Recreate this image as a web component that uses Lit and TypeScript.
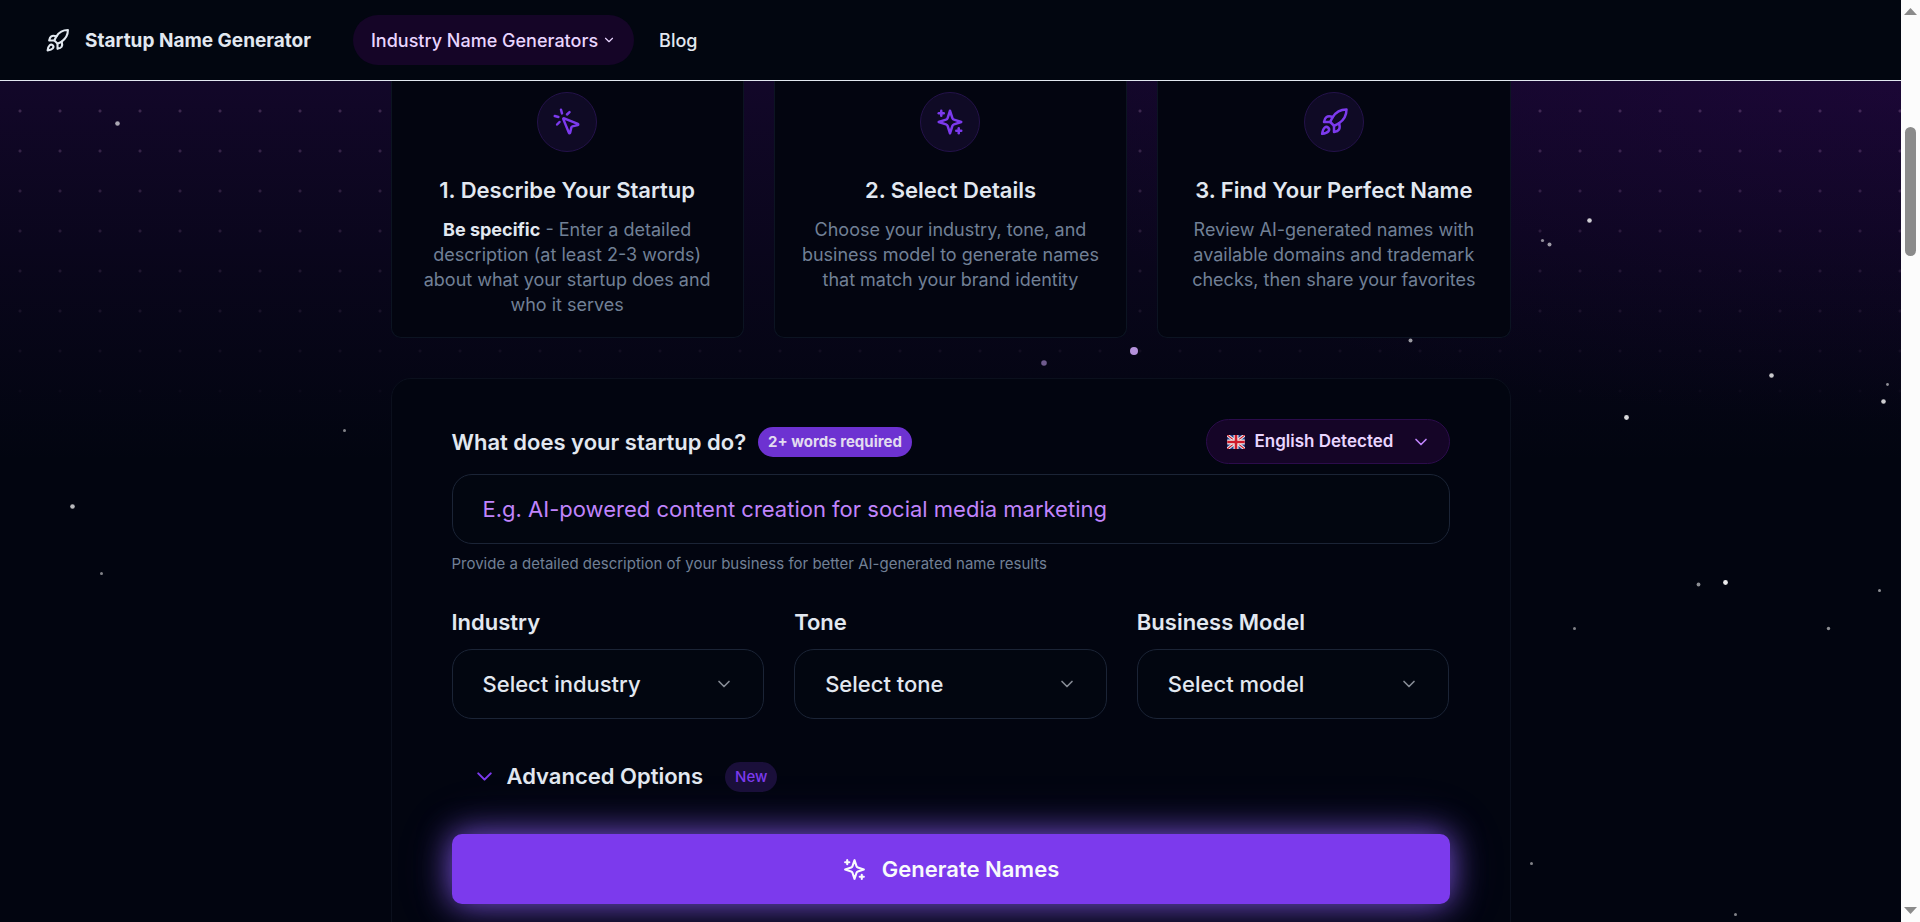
import { LitElement, html, css, svg, SVGTemplateResult } from "lit";
import { customElement } from "lit/decorators.js";

const icon = (cls: string, body: SVGTemplateResult) => html`
  <svg class="icon ${cls}" viewBox="0 0 24 24" aria-hidden="true">${body}</svg>
`;

const rocket = svg`
  <path d="M4.5 16.5c-1.5 1.26-2 5-2 5s3.74-.5 5-2c.71-.84.7-2.13-.09-2.91a2.18 2.18 0 0 0-2.91-.09z"></path>
  <path d="m12 15-3-3a22 22 0 0 1 2-3.95A12.88 12.88 0 0 1 22 2c0 2.72-.78 7.5-6 11a22.35 22.35 0 0 1-4 2z"></path>
  <path d="M9 12H4s.55-3.03 2-4c1.62-1.08 5 0 5 0"></path>
  <path d="M12 15v5s3.03-.55 4-2c1.08-1.62 0-5 0-5"></path>
`;
const pointer = svg`
  <path d="M14 4.1 12 6"></path>
  <path d="m5.1 8-2.9-.8"></path>
  <path d="m6 12-1.9 2"></path>
  <path d="M7.2 2.2 8 5.1"></path>
  <path d="M9.037 9.69a.498.498 0 0 1 .653-.653l11 4.5a.5.5 0 0 1-.074.949l-4.349 1.041a1 1 0 0 0-.74.739l-1.04 4.35a.5.5 0 0 1-.95.074z"></path>
`;
const sparkles = svg`
  <path d="m12 3-1.912 5.813a2 2 0 0 1-1.275 1.275L3 12l5.813 1.912a2 2 0 0 1 1.275 1.275L12 21l1.912-5.813a2 2 0 0 1 1.275-1.275L21 12l-5.813-1.912a2 2 0 0 1-1.275-1.275L12 3Z"></path>
  <path d="M5 3v4"></path>
  <path d="M19 17v4"></path>
  <path d="M3 5h4"></path>
  <path d="M17 19h4"></path>
`;
const chevron = svg`<path d="m6 9 6 6 6-6"></path>`;

const flag = html`
  <svg class="flag" viewBox="0 0 60 48" aria-hidden="true">
    <rect width="60" height="48" fill="#22408c"></rect>
    <path d="M0 0 60 48M60 0 0 48" stroke="#eee" stroke-width="11"></path>
    <path d="M0 0 60 48M60 0 0 48" stroke="#cf1b2b" stroke-width="4"></path>
    <path d="M30 0V48M0 24H60" stroke="#eee" stroke-width="17"></path>
    <path d="M30 0V48M0 24H60" stroke="#cf1b2b" stroke-width="9"></path>
  </svg>
`;

/* x, y, radius, opacity */
const STARS: [number, number, number, number][] = [
  [117, 123, 2.3, 0.65], [72, 506, 2.3, 0.72], [101, 573, 1.5, 0.5], [344, 430, 1.5, 0.5],
  [1589, 220, 2.3, 0.8], [1542, 240, 1.6, 0.55], [1549, 244, 2, 0.6], [1771, 375, 2.3, 0.78],
  [1887, 384, 1.4, 0.55], [1883, 401, 2.3, 0.8], [1626, 417, 2.4, 0.85], [1698, 584, 1.9, 0.55],
  [1725, 582, 2.4, 0.92], [1879, 590, 1.5, 0.55], [1574, 628, 1.5, 0.5], [1828, 628, 1.7, 0.55],
  [1531, 863, 1.5, 0.5], [1735, 914, 1.5, 0.5], [1410, 340, 2, 0.6],
];

@customElement("app-root")
export class AppRoot extends LitElement {
  static styles = css`
    :host {
      display: flex;
      height: 100vh;
      overflow: hidden;
      background: #020510;
      color: #e2e8f0;
      font-family: Inter, "Liberation Sans", sans-serif;
      font-size: 18px;
      line-height: 25px;
    }
    * { box-sizing: border-box; }
    h2, p { margin: 0; }
    a { color: inherit; text-decoration: none; }
    button, input, select { font: inherit; color: inherit; margin: 0; }
    select { appearance: none; border: 0; background: transparent; cursor: pointer; outline: none; }
    option { background: #020510; }

    .icon {
      flex: none;
      display: block;
      width: 25px;
      height: 25px;
      fill: none;
      stroke: currentColor;
      stroke-width: 2;
      stroke-linecap: round;
      stroke-linejoin: round;
    }
    .icon.s14 { width: 14px; height: 14px; }
    .icon.s20 { width: 20px; height: 20px; }
    .icon.s30 { width: 30px; height: 30px; }

    .page { flex: 1; min-width: 0; display: flex; flex-direction: column; }

    header {
      flex: none;
      display: flex;
      align-items: center;
      height: 81px;
      padding: 0 45px;
      background: #020610;
      border-bottom: 1px solid #e2e8f0;
    }
    .brand { display: flex; align-items: center; gap: 15px; font-size: 19px; font-weight: 700; }
    nav { display: flex; align-items: center; gap: 25px; margin-left: 42px; font-weight: 500; }
    .nav-pill {
      display: flex;
      align-items: center;
      gap: 4px;
      height: 50px;
      padding: 0 18px;
      border: 0;
      border-radius: 25px;
      background: #150527;
      color: #e9d5ff;
      font-weight: 500;
    }

    .scene { flex: 1; min-height: 0; position: relative; overflow: hidden; }
    .sky, .dots, .stars { position: absolute; inset: 0; pointer-events: none; }
    .sky {
      height: 380px;
      background:
        radial-gradient(900px 340px at 100% 0, rgba(59, 7, 100, 0.22), transparent),
        linear-gradient(rgba(56, 12, 98, 0.3), rgba(56, 12, 98, 0.13) 50%, transparent);
    }
    .dots {
      height: 360px;
      background: radial-gradient(circle, rgba(216, 160, 220, 0.24) 1px, transparent 2px) 0 10px / 40px 40px;
      mask-image: linear-gradient(#000, transparent);
    }
    .stars { width: 100%; height: 100%; }

    main { position: relative; width: 100%; max-width: 1120px; margin: 0 auto; }

    .steps { display: grid; grid-template-columns: repeat(3, 1fr); gap: 30px; }
    .step {
      display: flex;
      flex-direction: column;
      align-items: center;
      padding: 11px 24px 20px;
      border: 1px solid #0c1422;
      border-top: 0;
      border-radius: 0 0 10px 10px;
      background: #030510;
      text-align: center;
    }
    .badge-icon {
      display: grid;
      place-items: center;
      width: 60px;
      height: 60px;
      margin-bottom: 20px;
      border: 1px solid #24124a;
      border-radius: 50%;
      background: #0f0a25;
      color: #7c3aed;
    }
    .step h2 { margin-bottom: 9px; font-size: 22px; line-height: 36px; font-weight: 600; }
    .step p { color: #718096; }
    .step strong { color: #e2e8f0; font-weight: 700; }

    form {
      margin-top: 40px;
      padding: 40px 60px;
      border: 1px solid #0b101d;
      border-radius: 20px;
      background: #020510;
    }
    .ask { display: flex; align-items: center; gap: 12px; margin-bottom: 10px; }
    label { font-size: 22px; line-height: 36px; font-weight: 600; }
    .tag {
      padding: 0 10px;
      border-radius: 15px;
      background: #6d32d1;
      font-size: 15px;
      line-height: 30px;
      font-weight: 700;
      color: #e2dcf0;
    }
    .lang {
      display: flex;
      align-items: center;
      gap: 10px;
      height: 45px;
      margin-left: auto;
      padding: 0 18px 0 20px;
      border: 1px solid #2b0c4b;
      border-radius: 23px;
      background: #150527;
      color: #c084fc;
    }
    .lang select { padding: 0 7px 0 0; font-size: 17px; font-weight: 600; color: #e9d5ff; }
    .flag { width: 18px; height: 14px; }

    .field {
      display: block;
      width: 100%;
      height: 70px;
      padding: 0 30px;
      border: 1px solid #1b2436;
      border-radius: 20px;
      background: #020610;
      font-size: 22px;
      outline: none;
    }
    .field::placeholder { color: #c084fc; opacity: 1; }
    .hint { margin: 10px 0 30px; font-size: 15px; line-height: 20px; color: #718096; }

    .choices { display: grid; grid-template-columns: repeat(3, 1fr); gap: 30px; }
    .choice { display: flex; flex-direction: column; gap: 9px; }
    .drop { display: grid; align-items: center; }
    .drop > * { grid-area: 1 / 1; }
    .drop .field { font-weight: 500; }
    .drop .icon { justify-self: end; margin-right: 30px; color: #868b95; pointer-events: none; }

    .advanced {
      display: flex;
      align-items: center;
      gap: 10px;
      height: 55px;
      margin: 30px 0;
      padding: 0 20px;
      border: 0;
      background: transparent;
      font-size: 22px;
      font-weight: 600;
    }
    .advanced .icon { color: #7c3aed; }
    .new {
      margin-left: 12px;
      padding: 0 10px;
      border-radius: 15px;
      background: #1a0f3a;
      color: #7c3aed;
      font-size: 15px;
      line-height: 30px;
      font-weight: 500;
    }
    .generate {
      display: flex;
      align-items: center;
      justify-content: center;
      gap: 15px;
      width: 100%;
      height: 70px;
      border: 0;
      border-radius: 10px;
      background: #7c3aed;
      color: #f8fafc;
      font-size: 22px;
      font-weight: 600;
      box-shadow: 0 0 32px rgba(139, 92, 246, 0.85), 0 0 60px rgba(139, 92, 246, 0.18);
    }

    .scroll {
      flex: none;
      display: flex;
      flex-direction: column;
      align-items: center;
      justify-content: space-between;
      width: 19px;
      padding: 8px 0;
      background: #fcfcfc;
    }
    .scroll svg { display: block; width: 13px; height: 7px; fill: #8b8b8b; }
    .track { flex: 1; padding-top: 112px; }
    .thumb { width: 11px; height: 129px; border-radius: 6px; background: #8b8b8b; }
  `;

  private step(ic: SVGTemplateResult, title: string, text: unknown) {
    return html`
      <section class="step">
        <div class="badge-icon">${icon("s30", ic)}</div>
        <h2>${title}</h2>
        <p>${text}</p>
      </section>
    `;
  }

  private choice(id: string, label: string, placeholder: string) {
    return html`
      <div class="choice">
        <label for=${id}>${label}</label>
        <div class="drop">
          <select class="field" id=${id}><option>${placeholder}</option></select>
          ${icon("s20", chevron)}
        </div>
      </div>
    `;
  }

  render() {
    return html`
      <div class="page">
        <header>
          <a class="brand" href="#">${icon("", rocket)}<span>Startup Name Generator</span></a>
          <nav>
            <button class="nav-pill" type="button">Industry Name Generators ${icon("s14", chevron)}</button>
            <a href="#blog">Blog</a>
          </nav>
        </header>
        <div class="scene">
          <div class="sky"></div>
          <div class="dots"></div>
          <main>
            <div class="steps">
              ${this.step(pointer, "1. Describe Your Startup", html`<strong>Be specific</strong> - Enter a detailed description (at least 2-3 words) about what your startup does and who it serves`)}
              ${this.step(sparkles, "2. Select Details", "Choose your industry, tone, and business model to generate names that match your brand identity")}
              ${this.step(rocket, "3. Find Your Perfect Name", "Review AI-generated names with available domains and trademark checks, then share your favorites")}
            </div>
            <form @submit=${(e: Event) => e.preventDefault()}>
              <div class="ask">
                <label for="idea">What does your startup do?</label>
                <span class="tag">2+ words required</span>
                <div class="lang">
                  ${flag}
                  <select aria-label="Language"><option>English Detected</option></select>
                  ${icon("s20", chevron)}
                </div>
              </div>
              <input class="field" id="idea" type="text" placeholder="E.g. AI-powered content creation for social media marketing" />
              <p class="hint">Provide a detailed description of your business for better AI-generated name results</p>
              <div class="choices">
                ${this.choice("industry", "Industry", "Select industry")}
                ${this.choice("tone", "Tone", "Select tone")}
                ${this.choice("model", "Business Model", "Select model")}
              </div>
              <button class="advanced" type="button">
                ${icon("", chevron)}<span>Advanced Options</span><span class="new">New</span>
              </button>
              <button class="generate" type="submit">${icon("", sparkles)}<span>Generate Names</span></button>
            </form>
          </main>
          <svg class="stars" aria-hidden="true">
            ${STARS.map(([x, y, r, o]) => svg`<circle cx=${x + 0.5} cy=${y - 80.5} r=${r} fill="#fff" opacity=${o}></circle>`)}
            <circle cx="1044" cy="282" r="2.8" fill="#8a70ac" opacity="0.8"></circle>
            <circle cx="1134" cy="270" r="4" fill="#b592dc"></circle>
          </svg>
        </div>
      </div>
      <div class="scroll" aria-hidden="true">
        <svg viewBox="0 0 13 7"><path d="M6.5 0 13 7H0z"></path></svg>
        <div class="track"><div class="thumb"></div></div>
        <svg viewBox="0 0 13 7"><path d="M0 0H13L6.5 7z"></path></svg>
      </div>
    `;
  }
}
